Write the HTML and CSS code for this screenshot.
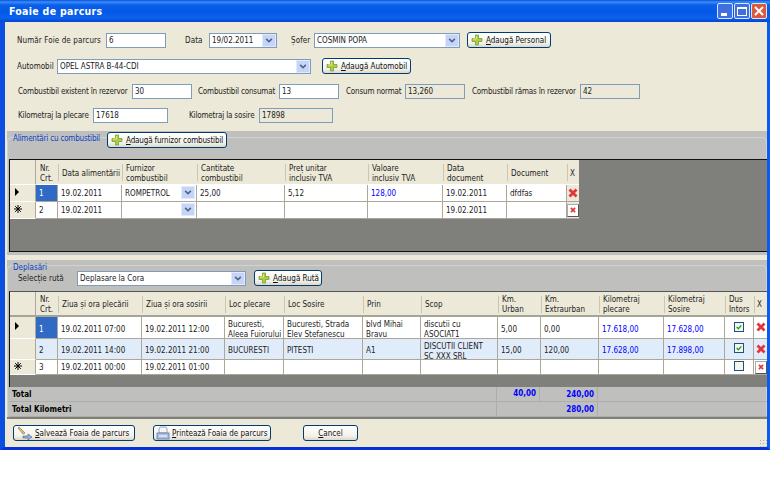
FILE: index.html
```html
<!DOCTYPE html>
<html lang="ro">
<head>
<meta charset="utf-8">
<title>Foaie de parcurs</title>
<link rel="stylesheet" href="styles.css">
</head>
<body>
<svg class="defs" width="0" height="0">
  <symbol id="plus" viewBox="0 0 12 12"><path d="M4.500 1h3v3.500H11v3H7.500V11h-3V7.500H1v-3h3.500z" fill="#a9cf45" stroke="#7d9a3a" stroke-width=".8"/><path d="M5.500 2v3H2" fill="none" stroke="#f0e27a"/></symbol>
  <symbol id="chev" viewBox="0 0 15 15"><path d="M4 5.500l3.500 3.500L11 5.500" fill="none" stroke="#4d6185" stroke-width="2"/></symbol>
  <symbol id="del" viewBox="0 0 10 10"><path d="M1.500 1.500l7 7M8.500 1.500l-7 7" stroke="#e2363c" stroke-width="2.800"/></symbol>
  <symbol id="tick" viewBox="0 0 12 12"><path d="M2.500 6l2.500 2.500 4.500-5" fill="none" stroke="#21a121" stroke-width="2"/></symbol>
  <symbol id="tri" viewBox="0 0 6 8"><path d="M1 0l4 4-4 4z" fill="#000"/></symbol>
  <symbol id="star" viewBox="0 0 8 8"><path d="M4 0v8M0 4h8M1.200 1.200l5.600 5.600M6.800 1.200L1.200 6.800" stroke="#000" stroke-width="1"/></symbol>
  <symbol id="save" viewBox="0 0 18 14"><path d="M2 2l1-1 6 6-2 1z" fill="#e8c26a" stroke="#8a7a50" stroke-width=".7"/><path d="M7 10h5V8l4 3-4 3v-2H7z" fill="#8fb0d8" stroke="#56749e" stroke-width=".7"/></symbol>
  <symbol id="print" viewBox="0 0 14 14"><path d="M4 1h6l1 2v4H3V3z" fill="#f4f6fa" stroke="#7d8db0" stroke-width=".8"/><rect x="1" y="7" width="12" height="6" fill="#a9c0e2" stroke="#5f78a8" stroke-width=".8"/><path d="M3 10h8" stroke="#fff"/></symbol>
</svg>

<div class="window">
  <div class="titlebar">
    <span class="title">Foaie de parcurs</span>
    <div class="winbtns">
      <span class="wb wb-min"><i class="glyph-min"></i></span>
      <span class="wb wb-max"><i class="glyph-max"></i></span>
      <span class="wb wb-close"><svg viewBox="0 0 12 12" width="12" height="12"><path d="M2 2l8 8M10 2l-8 8" stroke="#fff" stroke-width="2"/></svg></span>
    </div>
  </div>

  <div class="form">
    <div class="row row1">
      <label>Număr Foie de parcurs</label>
      <span class="field">6</span>
      <label class="pl19">Data</label>
      <span class="field combo">19/02.2011<span class="arrow"><svg width="15" height="15"><use href="#chev"/></svg></span></span>
      <label class="pl14">Șofer</label>
      <span class="field combo">COSMIN POPA<span class="arrow"><svg width="15" height="15"><use href="#chev"/></svg></span></span>
      <span class="btn-wrap pl7"><button class="btn"><svg class="ic" width="12" height="12"><use href="#plus"/></svg><span><u>A</u>daugă Personal</span></button></span>
    </div>
    <div class="row row2">
      <label>Automobil</label>
      <span class="field combo">OPEL ASTRA B-44-CDI<span class="arrow"><svg width="15" height="15"><use href="#chev"/></svg></span></span>
      <span class="btn-wrap pl11"><button class="btn"><svg class="ic" width="12" height="12"><use href="#plus"/></svg><span><u>A</u>daugă Automobil</span></button></span>
    </div>
    <div class="row row3">
      <label>Combustibil existent în rezervor</label>
      <span class="field">30</span>
      <label class="pl6">Combustibil consumat</label>
      <span class="field">13</span>
      <label class="pl7">Consum normat</label>
      <span class="field ro">13,260</span>
      <label class="pl7">Combustibil rămas în rezervor</label>
      <span class="field ro">42</span>
    </div>
    <div class="row row4">
      <label>Kilometraj la plecare</label>
      <span class="field">17618</span>
      <label class="pl21">Kilometraj la sosire</label>
      <span class="field ro">17898</span>
    </div>
  </div>

  <section class="sec sec1">
    <div class="group">
      <div class="group-head">
        <span class="legend legend-fuel">Alimentări cu combustibil</span>
        <button class="btn btn-fuel"><svg class="ic" width="12" height="12"><use href="#plus"/></svg><span><u>A</u>daugă furnizor combustibil</span></button>
      </div>
      <div class="grid grid1">
        <table>
          <colgroup><col class="c26"><col class="c22"><col class="c64"><col class="c75"><col class="c88"><col class="c83"><col class="c75"><col class="c64"><col class="c60"><col class="c12"></colgroup>
          <thead><tr><th class="rh"></th><th>Nr.<br>Crt.</th><th>Data alimentării</th><th>Furnizor<br>combustibil</th><th>Cantitate<br>combustibil</th><th>Preț unitar<br>inclusiv TVA</th><th>Valoare<br>inclusiv TVA</th><th>Data<br>document</th><th>Document</th><th class="thx">X</th></tr></thead>
          <tbody>
            <tr><td class="rh"><svg width="6" height="8"><use href="#tri"/></svg></td><td class="sel">1</td><td>19.02.2011</td><td class="ccombo">ROMPETROL<span class="arrow"><svg width="15" height="15"><use href="#chev"/></svg></span></td><td>25,00</td><td>5,12</td><td class="blue">128,00</td><td>19.02.2011</td><td>dfdfas</td><td class="cx"><svg width="10" height="10"><use href="#del"/></svg></td></tr>
            <tr><td class="rh"><svg width="8" height="8"><use href="#star"/></svg></td><td>2</td><td>19.02.2011</td><td class="ccombo"><span class="arrow"><svg width="15" height="15"><use href="#chev"/></svg></span></td><td></td><td></td><td></td><td>19.02.2011</td><td></td><td class="cx"><span class="xbtn"><svg width="6" height="6"><use href="#del"/></svg></span></td></tr>
          </tbody>
        </table>
      </div>
    </div>
  </section>

  <section class="sec sec2">
    <div class="group">
      <div class="group-head head2">
        <span class="legend">Deplasări</span>
      </div>
      <div class="route">
        <label>Selecție rută</label>
        <span class="field combo">Deplasare la Cora<span class="arrow"><svg width="15" height="15"><use href="#chev"/></svg></span></span>
        <button class="btn btn-route"><svg class="ic" width="12" height="12"><use href="#plus"/></svg><span><u>A</u>daugă Rută</span></button>
      </div>
      <div class="grid grid2">
        <table>
          <colgroup><col class="c26"><col class="c22"><col class="c84"><col class="c83"><col class="c59"><col class="c79"><col class="c58"><col class="c77"><col class="c43"><col class="c58"><col class="c65"><col class="c61"><col class="c29"><col class="c13"></colgroup>
          <thead><tr><th class="rh"></th><th>Nr.<br>Crt.</th><th>Ziua și ora plecării</th><th>Ziua și ora sosirii</th><th>Loc plecare</th><th>Loc Sosire</th><th>Prin</th><th>Scop</th><th>Km.<br>Urban</th><th>Km.<br>Extraurban</th><th>Kilometraj<br>plecare</th><th>Kilometraj<br>Sosire</th><th>Dus<br>Intors</th><th class="thx">X</th></tr></thead>
          <tbody>
            <tr class="r1"><td class="rh"><svg width="6" height="8"><use href="#tri"/></svg></td><td class="sel">1</td><td>19.02.2011 07:00</td><td>19.02.2011 12:00</td><td class="wrap"><span class="two">Bucuresti,<br>Aleea Fuiorului</span></td><td class="wrap"><span class="two">Bucuresti, Strada<br>Elev Stefanescu</span></td><td class="wrap"><span class="two">blvd Mihai<br>Bravu</span></td><td class="wrap"><span class="two">discutii cu<br>ASOCIAT1</span></td><td>5,00</td><td>0,00</td><td class="blue">17.618,00</td><td class="blue">17.628,00</td><td class="cchk"><span class="chk"><svg width="10" height="10"><use href="#tick"/></svg></span></td><td class="cx"><svg width="10" height="10"><use href="#del"/></svg></td></tr>
            <tr class="r2 alt"><td class="rh"></td><td>2</td><td>19.02.2011 14:00</td><td>19.02.2011 21:00</td><td>BUCURESTI</td><td>PITESTI</td><td>A1</td><td class="wrap"><span class="two">DISCUTII CLIENT<br>SC XXX SRL</span></td><td>15,00</td><td>120,00</td><td class="blue">17.628,00</td><td class="blue">17.898,00</td><td class="cchk"><span class="chk"><svg width="10" height="10"><use href="#tick"/></svg></span></td><td class="cx"><svg width="10" height="10"><use href="#del"/></svg></td></tr>
            <tr class="r3"><td class="rh"><svg width="8" height="8"><use href="#star"/></svg></td><td>3</td><td>19.02.2011 00:00</td><td>19.02.2011 01:00</td><td></td><td></td><td></td><td></td><td></td><td></td><td></td><td></td><td class="cchk"><span class="chk"></span></td><td class="cx"><span class="xbtn"><svg width="6" height="6"><use href="#del"/></svg></span></td></tr>
          </tbody>
        </table>
      </div>
      <div class="totals">
        <div class="tot-row">
          <span class="tot-label">Total</span>
          <span class="tot-a">40,00</span>
          <span class="tot-b">240,00</span>
          <span class="tot-c"></span>
        </div>
        <div class="tot-row">
          <span class="tot-label">Total Kilometri</span>
          <span class="tot-ab">280,00</span>
          <span class="tot-c"></span>
        </div>
      </div>
    </div>
  </section>

  <div class="footer">
    <button class="btn btn-save"><svg class="ic-l" width="18" height="14"><use href="#save"/></svg><span><u>S</u>alvează Foaia de parcurs</span></button>
    <button class="btn btn-print"><svg class="ic-l ic-p" width="14" height="14"><use href="#print"/></svg><span><u>P</u>rintează Foaia de parcurs</span></button>
    <button class="btn btn-cancel"><span><u>C</u>ancel</span></button>
  </div>
  <div class="grip"></div>
</div>
</body>
</html>
```
FILE: styles.css
```css
* { box-sizing: border-box; }
html, body { margin: 0; background: #fff; }
body { font-family: "DejaVu Sans Condensed", "DejaVu Sans", sans-serif; font-stretch: condensed; font-size: 8px; color: #222; width: 770px; height: 501px; overflow: hidden; }
.defs { position: absolute; }
.window { position: relative; width: 770px; height: 450px; background: #ece9d8; border-left: 5px solid #0b4fe0; border-right: 3px solid #0a5cf0; border-bottom: 3px solid #0831d9; }
.titlebar { margin: 0 -3px 0 -5px; height: 22px; display: flex; align-items: center; justify-content: space-between; padding: 0 3px 0 9px; background: linear-gradient(#0a4fd8 0, #3b8dfb 2px, #0a5fea 5px, #0359e6 12px, #0a62ee 18px, #0543cf 22px); }
.title { color: #fff; font-weight: bold; font-size: 10.500px; letter-spacing: .3px; font-stretch: condensed; }
.winbtns { display: flex; gap: 1px; }
.wb { width: 16px; height: 16px; border: 1px solid #dce6fa; border-radius: 2px; background: #3f6fe0; display: flex; align-items: center; justify-content: center; }
.wb-close { background: #db5a3a; }
.glyph-min { width: 6px; height: 3px; background: #fff; margin-top: 6px; margin-right: 3px; }
.glyph-max { width: 10px; height: 9px; border: 1px solid #fff; border-top-width: 2px; }

.form { padding: 10px 0 0 12px; }
.row { display: grid; height: 16px; align-items: center; white-space: nowrap; }
.row label { display: block; }
.row1 { grid-template-columns: 89px 60px 43px 68px 37px 146px 91px; }
.row2 { grid-template-columns: 40px 254px 100px; margin-top: 10px; }
.row3 { grid-template-columns: 114px 60px 87px 60px 66px 60px 115px 60px; margin-top: 9px; padding-left: 1px; }
.row4 { grid-template-columns: 75px 75px 91px 74px; margin-top: 8px; padding-left: 1px; }
.row1 label { letter-spacing: .1px; }
.row3 label, .row4 label { letter-spacing: -.17px; }
.pl19 { padding-left: 19px; }
.pl14 { padding-left: 14px; }
.pl7 { padding-left: 7px; }
.pl11 { padding-left: 11px; }
.pl6 { padding-left: 6px; }
.pl21 { padding-left: 21px; }
.btn-wrap { display: flex; }
.btn-wrap .btn { flex: 1; }

.field { position: relative; display: block; height: 15px; line-height: 13px; padding-left: 2px; background: #fff; border: 1px solid #7f9db9; overflow: hidden; white-space: nowrap; }
.ro { background: #ece9d8; }
.arrow { position: absolute; right: 0; top: 0; width: 14px; height: 13px; background: #c6d5f7; border: 1px solid #e1eafe; display: flex; align-items: center; justify-content: center; }
.btn { display: flex; align-items: center; height: 16px; padding: 0; font: inherit; color: #111; white-space: nowrap; border: 1px solid #003c74; border-radius: 3px; background: linear-gradient(#fff, #f3f2ea 70%, #dcd8c8); }
.ic { margin: 0 3px 0 3px; flex: none; }
.ic-l { margin: 0 1px 0 2px; flex: none; }
.ic-p { margin-right: 2px; }

.sec { margin-left: 2px; width: 760px; background: #bfc0bd; padding-top: 6px; }
.sec1 { margin-top: 8px; height: 124px; }
.sec2 { margin-top: 5px; height: 159px; padding-top: 5px; border-bottom: 2px solid #7f807c; }
.group { border: 1px solid #d2d3d0; border-bottom: 0; border-radius: 5px 5px 0 0; }
.group-head { display: flex; margin-top: -6px; height: 16px; padding-left: 5px; }
.legend { color: #0b3fc4; line-height: 11px; padding-top: 1px; background: #bfc0bd; }
.legend-fuel { flex: none; width: 94px; letter-spacing: -.2px; background: transparent; }
.btn-fuel { width: 120px; letter-spacing: -.15px; }
.head2 { height: 5px; }
.head2 .legend { display: block; padding-top: 2px; }
.route { display: flex; align-items: center; height: 16px; margin-top: 5px; padding-left: 10px; }
.route label { width: 59px; }
.route .field { width: 169px; }
.btn-route { width: 68px; margin-left: 8px; }

.grid { margin-left: 1px; width: 758px; background: #7f807c; border: 1px solid #111; border-right: 0; }
.grid1 { margin-top: 11px; height: 93px; }
.grid2 { margin-top: 5px; height: 96px; border-top-color: #555; border-bottom: 0; }
table { table-layout: fixed; border-collapse: separate; border-spacing: 0; width: auto; font-size: 8px; }
.c12 { width: 12px; } .c13 { width: 13px; } .c22 { width: 22px; } .c26 { width: 26px; } .c29 { width: 29px; }
.c43 { width: 43px; } .c58 { width: 58px; } .c59 { width: 59px; } .c60 { width: 60px; } .c61 { width: 61px; }
.c64 { width: 64px; } .c65 { width: 65px; } .c75 { width: 75px; } .c77 { width: 77px; } .c79 { width: 79px; }
.c83 { width: 83px; } .c84 { width: 84px; } .c88 { width: 88px; }
.grid1 table { width: 569px; }
.grid2 table { width: 757px; }
th { height: 25px; padding: 3px 0 0 4px; background: #ece9d8; font-weight: normal; text-align: left; line-height: 10px; white-space: nowrap; overflow: hidden; border-bottom: 1px solid #fff; background-image: linear-gradient(#c9c6b5, #c9c6b5); background-size: 1px 17px; background-position: left 4px; background-repeat: no-repeat; }
th:first-child, th:nth-child(2) { background-image: none; }
.grid2 th { border-bottom: 2px solid #a5a594; }
td { height: 17px; padding: 2px 0 0 3px; background: #fff; border-right: 1px solid #aca899; border-bottom: 1px solid #aca899; white-space: nowrap; overflow: hidden; line-height: 10px; }
.grid2 .r1 td { height: 22px; padding-top: 4px; }
.grid2 .r2 td { height: 21px; padding-top: 4px; }
.grid2 .r3 td { height: 15px; padding-top: 2px; }
.grid2 td.wrap { padding-top: 3px; vertical-align: top; }
.two { display: block; margin-bottom: -3px; }
.alt td { background: #e1ecfa; }
td.rh, th.rh { background-color: #ece9d8; border-right: 1px solid #aca899; }
td.rh, .grid2 tr td.rh { padding: 0 0 0 4px; border-bottom: 1px solid #fff; }
.alt td.rh { background: #ece9d8; }
td.sel { background: #316ac5; color: #fff; }
.blue { color: #0000ff; }
td.ccombo { position: relative; }
.ccombo .arrow { top: 1px; right: 1px; }
th.thx { padding-left: 3px; background-color: #ece9d8; }
td.cx, .grid2 tr td.cx { padding: 0; text-align: center; background: #ece9d8; border-right: 0; }
.grid2 tr.alt td.cx { background: #e1ecfa; }
td.cx svg { vertical-align: middle; }
.grid2 tr.r1 td.cx, .grid2 tr.r3 td.cx { background: #fff; }
.xbtn { display: inline-flex; width: 12px; height: 13px; background: #fff; border: 1px solid #555; border-top-color: #aaa; border-left-color: #aaa; align-items: center; justify-content: center; }
td.cchk, .grid2 tr td.cchk { padding: 0; text-align: center; }
.chk { display: inline-flex; width: 10px; height: 10px; background: #f5f5f0; border: 1px solid #1c5180; align-items: center; justify-content: center; }
.chk svg { width: 8px; height: 8px; }

.totals { margin-left: 1px; width: 758px; color: #000; font-weight: bold; }
.tot-row { display: grid; height: 15px; grid-template-columns: 488px 43px 58px 169px; border-bottom: 1px solid #adaeab; align-items: stretch; line-height: 12px; }
.tot-row:last-child { grid-template-columns: 488px 101px 169px; }
.tot-label { padding-left: 3px; padding-top: 2px; border-right: 1px solid #adaeab; }
.tot-a, .tot-b, .tot-ab { color: #0000ff; text-align: right; padding-right: 3px; border-right: 1px solid #adaeab; }
.tot-a { padding-top: 1px; }
.tot-b, .tot-ab { padding-top: 2px; }

.footer { display: flex; align-items: center; height: 16px; margin-top: 6px; padding-left: 8px; }
.btn-save { width: 122px; }
.btn-print { width: 118px; margin-left: 18px; }
.btn-cancel { width: 55px; margin-left: 32px; justify-content: center; }
.grip { position: absolute; right: 0; bottom: 0; width: 8px; height: 8px; background-image: radial-gradient(circle, #b5b2a0 1px, transparent 1px); background-size: 3px 3px; }
```
